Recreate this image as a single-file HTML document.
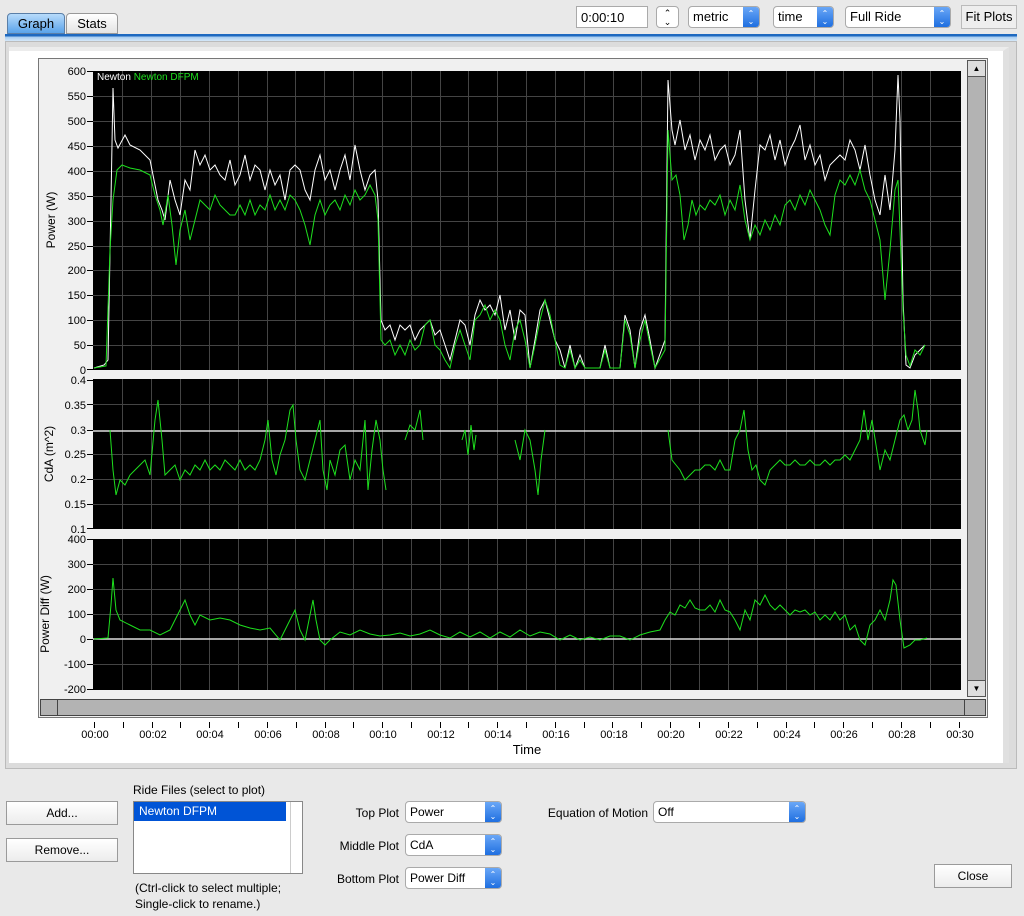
<!DOCTYPE html>
<html><head><meta charset="utf-8"><style>
*{box-sizing:border-box;margin:0;padding:0}
body{width:1024px;height:916px;background:#e9e9e9;font-family:"Liberation Sans",sans-serif;font-size:12px;color:#000;position:relative;overflow:hidden}
.a{position:absolute}
.btn{position:absolute;background:linear-gradient(#fff,#ececec);border:1px solid #9a9a9a;text-align:center;font-size:12px}
.combo{position:absolute;background:#fff;border:1px solid #aaa;border-radius:4px;font-size:12px;padding-left:4px;overflow:hidden}
.combo .ar{position:absolute;right:0;top:0;bottom:0;width:16px;background:linear-gradient(#6aa7f7,#1f6fe0);color:#fff;font-size:8px;line-height:8px;text-align:center;padding-top:3px}
.lbl{position:absolute;font-size:12px;text-align:right}
</style></head><body>
<!-- tabs -->
<div class="a" style="left:7px;top:13px;width:58px;height:21px;background:linear-gradient(#b8dbfb,#5aa3ea);border:1px solid #5a7fa8;border-radius:4px 4px 0 0;text-align:center;line-height:19px;font-size:13px">Graph</div>
<div class="a" style="left:66px;top:13px;width:52px;height:21px;background:linear-gradient(#fff,#e4e4e4);border:1px solid #999;border-radius:4px 4px 0 0;text-align:center;line-height:19px;font-size:13px">Stats</div>
<div class="a" style="left:5px;top:34px;width:1012px;height:7px;background:linear-gradient(#1e69c0 0,#1e69c0 2px,#a8cdf0 3px,#d6e8f8 7px)"></div>
<!-- top controls -->
<div class="a" style="left:576px;top:6px;width:72px;height:22px;background:#fff;border:1px solid #aaa;font-size:13px;padding:3px 4px">0:00:10</div>
<div class="a" style="left:656px;top:6px;width:23px;height:22px;background:#fff;border:1px solid #aaa;border-radius:4px;font-size:9px;text-align:center;line-height:9px;padding-top:2px">⌃<br>⌄</div>
<div class="combo" style="left:688px;top:6px;width:72px;height:22px;line-height:20px;font-size:13px">metric<div class="ar">⌃<br>⌄</div></div>
<div class="combo" style="left:773px;top:6px;width:61px;height:22px;line-height:20px;font-size:13px">time<div class="ar">⌃<br>⌄</div></div>
<div class="combo" style="left:845px;top:6px;width:106px;height:22px;line-height:20px;font-size:13px">Full Ride<div class="ar">⌃<br>⌄</div></div>
<div class="btn" style="left:961px;top:5px;width:56px;height:24px;line-height:22px;font-size:13px;border-color:#bbb;background:#eee">Fit Plots</div>
<!-- panel -->
<div class="a" style="left:5px;top:41px;width:1012px;height:728px;background:#dcdcdc;border:1px solid #bbb"></div>
<div class="a" style="left:9px;top:47px;width:1000px;height:716px;background:#fff;border-right:6px solid #e0e0e0;border-top:4px solid #ececec"></div>
<div class="a" style="left:38px;top:58px;width:950px;height:660px;background:#f0f0f0;border:1px solid #777"></div>
<!-- v scrollbar -->
<div class="a" style="left:967px;top:60px;width:19px;height:637px;background:#b3b3b3;border:1px solid #555"></div>
<div class="a" style="left:967px;top:60px;width:19px;height:17px;background:#ddd;border:1px solid #555;font-size:8px;text-align:center;line-height:15px">▲</div>
<div class="a" style="left:967px;top:680px;width:19px;height:17px;background:#ddd;border:1px solid #555;font-size:8px;text-align:center;line-height:15px">▼</div>
<!-- h scrollbar -->
<div class="a" style="left:40px;top:699px;width:946px;height:17px;background:#b3b3b3;border:1px solid #444"></div>
<div class="a" style="left:57px;top:699px;width:1px;height:17px;background:#444"></div>
<div class="a" style="left:964px;top:699px;width:1px;height:17px;background:#444"></div>
<svg class="a" style="left:0;top:0" width="1024" height="770" font-family="Liberation Sans, sans-serif" font-size="11">
<g fill="#000">
<rect x="93" y="71" width="868" height="299"/>
<rect x="93" y="379" width="868" height="150"/>
<rect x="93" y="539" width="868" height="151"/>
</g>
<g stroke="#444" stroke-width="1">
<path d="M122.5 71V370M151.5 71V370M180.5 71V370M209.5 71V370M238.5 71V370M267.5 71V370M295.5 71V370M324.5 71V370M353.5 71V370M382.5 71V370M411.5 71V370M440.5 71V370M468.5 71V370M497.5 71V370M526.5 71V370M555.5 71V370M584.5 71V370M613.5 71V370M641.5 71V370M670.5 71V370M699.5 71V370M728.5 71V370M757.5 71V370M786.5 71V370M814.5 71V370M843.5 71V370M872.5 71V370M901.5 71V370M930.5 71V370"/>
<path d="M122.5 379V529M151.5 379V529M180.5 379V529M209.5 379V529M238.5 379V529M267.5 379V529M295.5 379V529M324.5 379V529M353.5 379V529M382.5 379V529M411.5 379V529M440.5 379V529M468.5 379V529M497.5 379V529M526.5 379V529M555.5 379V529M584.5 379V529M613.5 379V529M641.5 379V529M670.5 379V529M699.5 379V529M728.5 379V529M757.5 379V529M786.5 379V529M814.5 379V529M843.5 379V529M872.5 379V529M901.5 379V529M930.5 379V529"/>
<path d="M122.5 539V690M151.5 539V690M180.5 539V690M209.5 539V690M238.5 539V690M267.5 539V690M295.5 539V690M324.5 539V690M353.5 539V690M382.5 539V690M411.5 539V690M440.5 539V690M468.5 539V690M497.5 539V690M526.5 539V690M555.5 539V690M584.5 539V690M613.5 539V690M641.5 539V690M670.5 539V690M699.5 539V690M728.5 539V690M757.5 539V690M786.5 539V690M814.5 539V690M843.5 539V690M872.5 539V690M901.5 539V690M930.5 539V690"/>
<path d="M93 96.5H961M93 121.5H961M93 146.5H961M93 171.5H961M93 196.5H961M93 221.5H961M93 246.5H961M93 270.5H961M93 295.5H961M93 320.5H961M93 345.5H961"/>
<path d="M93 404.5H961M93 454.5H961M93 479.5H961M93 504.5H961"/>
<path d="M93 564.5H961M93 589.5H961M93 614.5H961M93 664.5H961"/>
</g>
<g stroke="#ddd" stroke-width="1.5"><path d="M93 431H961M93 639H961"/></g>
<!-- y tick labels -->
<g fill="#000" text-anchor="end" font-size="11">
<text x="86" y="75">600</text><text x="86" y="100">550</text><text x="86" y="125">500</text><text x="86" y="150">450</text><text x="86" y="175">400</text><text x="86" y="200">350</text><text x="86" y="225">300</text><text x="86" y="250">250</text><text x="86" y="274">200</text><text x="86" y="299">150</text><text x="86" y="324">100</text><text x="86" y="349">50</text><text x="86" y="374">0</text>
<text x="86" y="384">0.4</text><text x="86" y="409">0.35</text><text x="86" y="434">0.3</text><text x="86" y="458">0.25</text><text x="86" y="483">0.2</text><text x="86" y="508">0.15</text><text x="86" y="533">0.1</text>
<text x="86" y="543">400</text><text x="86" y="568">300</text><text x="86" y="593">200</text><text x="86" y="618">100</text><text x="86" y="643">0</text><text x="86" y="668">-100</text><text x="86" y="693">-200</text>
</g>
<g stroke="#000"><path d="M87 71.5h6M87 96.5h6M87 121.5h6M87 146.5h6M87 171.5h6M87 196.5h6M87 221.5h6M87 246.5h6M87 270.5h6M87 295.5h6M87 320.5h6M87 345.5h6M87 369.5h6M87 380.5h6M87 404.5h6M87 430.5h6M87 454.5h6M87 479.5h6M87 504.5h6M87 528.5h6M87 539.5h6M87 564.5h6M87 589.5h6M87 614.5h6M87 639.5h6M87 664.5h6M87 689.5h6"/>
<path d="M94.5 722v6M123.5 722v6M152.5 722v6M180.5 722v6M209.5 722v6M238.5 722v6M267.5 722v6M296.5 722v6M325.5 722v6M353.5 722v6M382.5 722v6M411.5 722v6M440.5 722v6M468.5 722v6M497.5 722v6M526.5 722v6M555.5 722v6M584.5 722v6M612.5 722v6M641.5 722v6M670.5 722v6M699.5 722v6M728.5 722v6M757.5 722v6M786.5 722v6M814.5 722v6M843.5 722v6M872.5 722v6M901.5 722v6M930.5 722v6M959.5 722v6"/></g>
<g fill="#000" text-anchor="middle" font-size="11">
<text x="95" y="738">00:00</text><text x="153" y="738">00:02</text><text x="210" y="738">00:04</text><text x="268" y="738">00:06</text><text x="326" y="738">00:08</text><text x="383" y="738">00:10</text><text x="441" y="738">00:12</text><text x="498" y="738">00:14</text><text x="556" y="738">00:16</text><text x="614" y="738">00:18</text><text x="671" y="738">00:20</text><text x="729" y="738">00:22</text><text x="787" y="738">00:24</text><text x="844" y="738">00:26</text><text x="902" y="738">00:28</text><text x="960" y="738">00:30</text>
<text x="527" y="754" font-size="13">Time</text>
</g>
<g font-size="12" fill="#000" text-anchor="middle">
<text transform="translate(55 220) rotate(-90)">Power (W)</text>
<text transform="translate(53 454) rotate(-90)">CdA (m^2)</text>
<text transform="translate(49 614) rotate(-90)">Power Diff (W)</text>
</g>
<text x="97" y="80" fill="#fff" font-size="10">Newton <tspan fill="#1ee01e">Newton DFPM</tspan></text>
<!-- power white -->
<polyline fill="none" stroke="#fff" stroke-width="1" points="94,368 104,365 108,360 111,200 113,88 115,140 118,148 125,135 130,145 140,150 150,160 158,200 162,210 165,220 170,180 175,200 180,215 185,180 190,190 195,150 200,165 205,155 210,170 215,165 220,175 225,180 230,160 235,185 240,175 245,155 250,180 255,165 260,170 265,190 270,170 275,185 280,175 285,200 290,170 295,165 300,170 305,190 310,200 315,170 320,155 325,180 330,170 335,190 340,170 345,155 350,180 355,145 360,170 365,190 370,175 375,170 378,200 381,320 385,330 390,325 395,340 400,325 405,330 410,325 415,340 420,330 425,325 430,320 435,335 440,330 445,345 450,360 455,340 460,320 465,325 470,345 475,315 480,300 485,310 490,305 495,315 500,295 505,330 510,310 515,340 520,310 525,315 530,368 535,340 540,310 545,300 550,320 555,340 560,350 565,368 570,345 575,368 580,355 585,368 600,368 605,345 610,368 620,368 625,315 630,330 635,368 640,330 645,315 650,340 655,368 665,340 668,80 672,130 675,145 680,120 685,150 690,135 695,160 700,140 705,150 710,135 715,160 720,150 725,145 730,165 735,155 740,130 745,200 750,240 755,190 760,145 765,150 770,135 775,160 780,140 785,165 790,150 795,140 800,125 805,160 810,145 815,165 820,155 825,180 830,165 835,160 840,155 845,160 850,140 855,150 860,170 865,145 870,175 875,200 880,215 885,175 890,210 895,150 898,75 900,120 903,300 906,365 910,368 915,355 920,350 925,345"/>
<polyline fill="none" stroke="#1ee01e" stroke-width="1" points="94,368 106,366 110,250 113,200 117,170 122,165 130,168 140,170 150,175 155,195 160,210 163,225 168,195 172,225 176,265 180,230 185,210 190,240 195,220 200,200 205,205 210,210 215,195 220,205 225,210 230,215 235,215 240,205 245,215 250,200 255,215 260,205 265,210 270,195 275,210 280,200 285,210 290,195 295,200 300,210 305,225 310,245 315,215 320,200 325,215 330,205 335,200 340,210 345,195 350,205 355,190 360,200 365,195 370,185 375,195 378,220 381,340 385,345 390,340 395,355 400,345 405,355 410,340 415,350 420,345 425,325 430,320 435,345 440,350 445,360 450,368 455,345 460,330 465,345 470,360 475,320 480,315 485,305 490,320 495,310 500,320 505,345 510,360 515,330 520,320 525,340 530,368 535,345 540,320 545,300 550,315 555,340 560,365 565,368 570,350 575,368 580,360 585,368 600,368 605,350 610,368 620,368 625,320 630,335 635,368 640,340 645,320 650,345 655,368 665,350 668,130 672,180 676,175 680,195 684,240 688,225 692,200 696,215 700,205 705,210 710,200 715,205 720,195 725,215 730,200 735,210 740,185 745,220 750,240 755,225 760,235 765,220 770,230 775,215 780,225 785,205 790,200 795,210 800,195 805,205 810,190 815,200 820,210 825,225 830,235 835,195 840,180 845,185 850,175 855,185 860,170 865,190 870,200 875,220 880,240 885,300 890,250 895,190 898,180 900,230 903,310 906,355 910,366 915,350 920,355 925,345"/>
<!-- CdA -->
<g fill="none" stroke="#1ee01e" stroke-width="1">
<polyline points="110,430 113,470 116,495 120,480 125,485 130,475 135,470 140,465 145,460 150,475 155,420 158,400 162,440 165,475 170,470 175,465 180,480 185,470 190,475 195,465 200,470 205,460 210,470 215,465 220,470 225,460 230,465 235,470 240,460 245,470 250,465 255,470 260,460 265,440 268,420 272,460 276,475 280,455 285,440 290,410 293,405 296,440 300,470 305,480 310,460 315,440 320,420 323,470 327,490 330,460 335,475 340,450 345,445 350,480 355,460 360,470 365,420 368,490 372,450 376,420 380,440 383,470 386,490"/>
<polyline points="405,440 410,425 415,430 420,410 423,440"/>
<polyline points="462,440 465,430 468,455 471,425 474,450 476,435"/>
<polyline points="515,440 520,460 525,430 530,440 535,470 538,495 541,460 545,430"/>
<polyline points="668,430 672,460 676,465 680,470 685,480 690,475 695,470 700,470 705,465 710,465 715,470 720,460 725,470 730,470 735,440 740,430 744,410 748,450 752,470 756,465 760,480 765,485 770,470 775,465 780,460 785,465 790,465 795,460 800,465 805,465 810,460 815,465 820,465 825,460 830,465 835,460 840,460 845,455 850,460 855,450 860,440 864,410 868,440 872,420 876,445 880,470 885,450 890,460 895,440 900,420 904,415 908,430 912,420 915,390 918,410 920,430 925,445 927,430"/>
<polyline points="94,639 108,638 111,605 113,578 116,610 120,620 130,625 140,630 150,630 160,635 170,630 175,620 180,610 185,600 190,615 195,625 200,615 210,620 220,618 230,620 240,625 250,628 260,630 270,628 280,640 285,630 290,620 295,610 300,630 305,640 310,615 313,600 316,620 320,640 325,645 330,640 340,632 350,635 360,630 370,634 380,636 390,635 400,633 410,636 420,634 430,630 440,635 450,638 460,632 470,637 480,632 490,638 500,632 510,637 520,630 530,636 540,632 550,634 560,640 570,635 580,640 590,637 600,640 610,636 620,636 630,640 640,635 650,632 660,630 665,620 670,612 675,615 680,605 685,608 690,600 695,608 700,610 705,610 710,605 715,612 720,600 725,610 730,612 735,620 740,630 745,610 750,620 755,600 760,605 765,595 770,605 775,610 780,605 785,610 790,615 795,610 800,612 805,610 810,615 815,612 820,620 825,615 830,620 835,612 840,620 845,615 850,630 855,625 860,640 865,645 870,625 875,620 880,610 885,620 890,600 893,580 896,585 900,620 904,648 910,645 915,640 920,640 927,638"/>
</g>
</svg>
<!-- bottom controls -->
<div class="btn" style="left:6px;top:801px;width:112px;height:24px;line-height:22px">Add...</div>
<div class="btn" style="left:6px;top:838px;width:112px;height:24px;line-height:22px">Remove...</div>
<div class="a" style="left:133px;top:783px">Ride Files (select to plot)</div>
<div class="a" style="left:133px;top:801px;width:170px;height:73px;background:#fff;border:1px solid #888"></div>
<div class="a" style="left:290px;top:802px;width:12px;height:71px;border-left:1px solid #ccc;background:#fff"></div>
<div class="a" style="left:134px;top:802px;width:152px;height:19px;background:#0054d6;color:#fff;padding:2px 5px">Newton DFPM</div>
<div class="a" style="left:135px;top:880px;line-height:16px">(Ctrl-click to select multiple;<br>Single-click to rename.)</div>
<div class="lbl" style="left:300px;width:99px;top:806px">Top Plot</div>
<div class="lbl" style="left:300px;width:99px;top:839px">Middle Plot</div>
<div class="lbl" style="left:300px;width:99px;top:872px">Bottom Plot</div>
<div class="combo" style="left:405px;top:801px;width:97px;height:22px;line-height:20px">Power<div class="ar">⌃<br>⌄</div></div>
<div class="combo" style="left:405px;top:834px;width:97px;height:22px;line-height:20px">CdA<div class="ar">⌃<br>⌄</div></div>
<div class="combo" style="left:405px;top:867px;width:97px;height:22px;line-height:20px">Power Diff<div class="ar">⌃<br>⌄</div></div>
<div class="lbl" style="left:520px;width:128px;top:806px">Equation of Motion</div>
<div class="combo" style="left:653px;top:801px;width:153px;height:22px;line-height:20px">Off<div class="ar">⌃<br>⌄</div></div>
<div class="btn" style="left:934px;top:864px;width:78px;height:24px;line-height:22px">Close</div>
</body></html>
